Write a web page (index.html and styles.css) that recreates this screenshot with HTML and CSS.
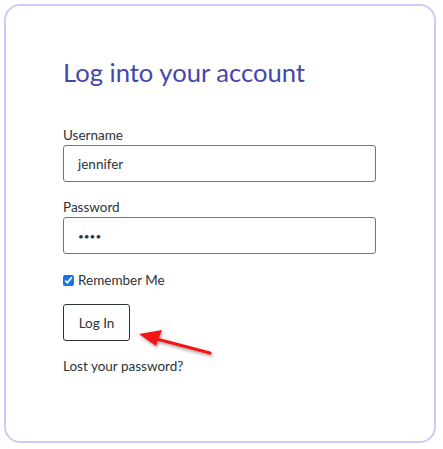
FILE: index.html
```html
<!DOCTYPE html>
<html>
<head>
<meta charset="utf-8">
<link rel="stylesheet" href="styles.css">
</head>
<body>
<div class="card">
  <h1 class="title">Log into your account</h1>
  <form class="form">
    <div class="field">
      <label class="label">Username</label>
      <div class="input">jennifer</div>
    </div>
    <div class="field">
      <label class="label">Password</label>
      <div class="input dots">••••</div>
    </div>
    <label class="remember"><input type="checkbox" checked class="check"> Remember Me</label>
    <div class="btn-row">
      <div class="btn">Log In</div>
      <svg class="arrow" width="90" height="40" viewBox="0 0 90 40">
        <defs>
          <filter id="sh" x="-20%" y="-50%" width="140%" height="200%">
            <feDropShadow dx="1" dy="2" stdDeviation="1.5" flood-color="#000" flood-opacity="0.35"/>
          </filter>
        </defs>
        <g filter="url(#sh)">
          <line x1="79" y1="30" x2="18" y2="14" stroke="#f21313" stroke-width="3.2" stroke-linecap="round"/>
          <polygon points="8,11 31,7 25,23" fill="#f21313"/>
        </g>
      </svg>
    </div>
    <a class="lost">Lost your password?</a>
  </form>
</div>
</body>
</html>
```

FILE: styles.css
```css
html, body { margin: 0; padding: 0; background: #fff; }
body { font-family: "Lato", "Open Sans", sans-serif; color: #2c3338; }
.card {
  margin: 4px 0 0 4px;
  width: 432px;
  height: 439px;
  box-sizing: border-box;
  border: 2px solid #c9ccf8;
  border-radius: 16px;
  padding: 50px 58px 0 57px;
}
.title {
  margin: 0;
  font-weight: 400;
  font-size: 25.6px;
  line-height: 32px;
  color: #4547ad;
}
.form { margin-top: 38px; display: flex; flex-direction: column; }
.field { display: flex; flex-direction: column; margin-bottom: 16px; }
.label { font-size: 13.5px; line-height: 18px; color: #2c3338; margin-bottom: 1px; }
.input {
  height: 37px;
  box-sizing: border-box;
  border: 1px solid #757575;
  border-radius: 3px;
  padding: 0 14px;
  display: flex; align-items: center;
  font-size: 13.5px;
  color: #2c3338;
}
.dots { font-size: 10px; }
.remember { display: flex; align-items: center; font-size: 13.5px; line-height: 18px; margin-top: 1px; }
.check { margin: 0 4px 0 0; width: 11px; height: 11px; accent-color: #1a73e8; }
.btn-row { position: relative; margin-top: 15px; height: 37px; }
.btn {
  width: 67px; height: 37px; box-sizing: border-box;
  border: 1px solid #2c3338; border-radius: 3px;
  display: flex; align-items: center; justify-content: center;
  font-size: 13.5px; color: #2c3338;
}
.arrow { position: absolute; left: 68px; top: 19px; }
.lost { margin-top: 16px; font-size: 13.5px; line-height: 18px; color: #2c3338; }
```
